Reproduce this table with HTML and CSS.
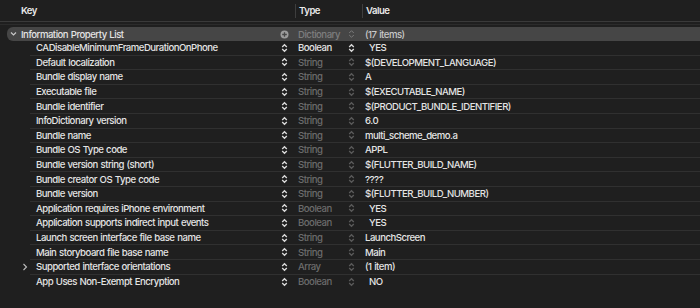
FILE: index.html
```html
<!DOCTYPE html>
<html lang="en">
<head>
    <meta charset="UTF-8">
    <title>Info.plist</title>
    <link rel="stylesheet" href="styles.css">
</head>
<body>
    <div class="header">
        <div class="h-key">Key</div>
        <div class="h-type">Type</div>
        <div class="h-value">Value</div>
    </div>
    <div class="rule"></div>

    <div class="root">
        <div class="key">
            <svg class="chev" width="7" height="6" viewBox="0 0 7 6"><path d="M1 1.5 L3.5 4 L6 1.5" fill="none" stroke="#c8c8c8" stroke-width="1.2"/></svg>
            Information Property List
        </div>
        <div class="btn">
            <svg width="9" height="9" viewBox="0 0 9 9"><circle cx="4.5" cy="4.5" r="4" fill="#9c9c9c"/><path d="M4.5 2.2 V6.8 M2.2 4.5 H6.8" stroke="#464646" stroke-width="1.3"/></svg>
        </div>
        <div class="type dim">Dictionary</div>
        <div class="btn">
            <svg width="7" height="10" viewBox="0 0 7 10"><path d="M1.2 4 L3.5 1.7 L5.8 4 M1.2 6 L3.5 8.3 L5.8 6" fill="none" stroke="#7a7a7a" stroke-width="1"/></svg>
        </div>
        <div class="value soft">(17 items)</div>
    </div>

    <div class="list" id="list"></div>

    <script>
        const items = [
            { key: "CADisableMinimumFrameDurationOnPhone", type: "Boolean", value: "YES", active: true },
            { key: "Default localization", type: "String", value: "$(DEVELOPMENT_LANGUAGE)" },
            { key: "Bundle display name", type: "String", value: "A" },
            { key: "Executable file", type: "String", value: "$(EXECUTABLE_NAME)" },
            { key: "Bundle identifier", type: "String", value: "$(PRODUCT_BUNDLE_IDENTIFIER)" },
            { key: "InfoDictionary version", type: "String", value: "6.0" },
            { key: "Bundle name", type: "String", value: "multi_scheme_demo.a" },
            { key: "Bundle OS Type code", type: "String", value: "APPL" },
            { key: "Bundle version string (short)", type: "String", value: "$(FLUTTER_BUILD_NAME)" },
            { key: "Bundle creator OS Type code", type: "String", value: "????" },
            { key: "Bundle version", type: "String", value: "$(FLUTTER_BUILD_NUMBER)" },
            { key: "Application requires iPhone environment", type: "Boolean", value: "YES" },
            { key: "Application supports indirect input events", type: "Boolean", value: "YES" },
            { key: "Launch screen interface file base name", type: "String", value: "LaunchScreen" },
            { key: "Main storyboard file base name", type: "String", value: "Main" },
            { key: "Supported interface orientations", type: "Array", value: "(1 item)", folded: true },
            { key: "App Uses Non-Exempt Encryption", type: "Boolean", value: "NO" }
        ];

        function stepper(color) {
            return `<svg width="7" height="10" viewBox="0 0 7 10"><path d="M1.2 4 L3.5 1.7 L5.8 4 M1.2 6 L3.5 8.3 L5.8 6" fill="none" stroke="${color}" stroke-width="1.3"/></svg>`;
        }

        const list = document.getElementById('list');
        items.forEach(item => {
            const row = document.createElement('div');
            row.className = 'row';
            const chev = item.folded
                ? '<svg class="fold" width="6" height="8" viewBox="0 0 6 8"><path d="M1.5 1 L4.5 4 L1.5 7" fill="none" stroke="#bdbdbd" stroke-width="1.1"/></svg>'
                : '';
            const isBool = item.type === 'Boolean';
            row.innerHTML = `
                <div class="key">${chev}${item.key}</div>
                <div class="btn">${stepper('#dcdcdc')}</div>
                <div class="type ${item.active ? '' : 'dim'}">${item.type}</div>
                <div class="btn">${stepper(item.active ? '#dcdcdc' : '#5a5a5a')}</div>
                <div class="value ${isBool ? 'bool' : ''}">${item.value}</div>
            `;
            list.appendChild(row);
        });
    </script>
</body>
</html>
```

FILE: styles.css
```css
body {
    margin: 0;
    background: #1f1f1f;
    color: #e4e4e4;
    font-family: Inter, "Liberation Sans", sans-serif;
    font-size: 9.6px;
    font-weight: 500;
    letter-spacing: -0.5px;
    word-spacing: 0.6px;
    overflow: hidden;
}

.header {
    display: grid;
    grid-template-columns: 295px 67px 1fr;
    height: 21px;
    align-items: center;
    border-bottom: 1px solid #3a3a3a;
    font-weight: 600;
    color: #e8e8e8;
}

.h-key {
    padding-left: 21px;
}

.h-type,
.h-value {
    border-left: 1px solid #3e3e3e;
    padding-left: 3px;
    line-height: 14px;
}

.rule {
    height: 2px;
    border-bottom: 1px solid #2b2b2b;
    margin-bottom: 2px;
}

.root,
.row {
    display: grid;
    grid-template-columns: 272px 11px 56px 11px 1fr;
    align-items: center;
}

.root {
    height: 14px;
    margin-left: 7px;
    background: #464646;
    border-radius: 6px 0 0 6px;
}

.root .key {
    padding-left: 3px;
    display: flex;
    align-items: center;
}

.chev {
    margin-right: 4px;
}

.row {
    height: 14.6px;
    box-sizing: border-box;
    margin-left: 30px;
    grid-template-columns: 249px 11px 56px 11px 1fr;
    border-bottom: 1px solid #303030;
}

.row:last-child {
    border-bottom: none;
}

.key,
.type,
.value {
    white-space: nowrap;
    overflow: hidden;
    line-height: 13px;
}

.row .key {
    padding-left: 6px;
    position: relative;
    overflow: visible;
}

.fold {
    position: absolute;
    left: -8px;
    top: 2.5px;
}

.btn {
    display: flex;
    justify-content: center;
    align-items: center;
}

.type {
    padding-left: 8px;
}

.value {
    padding-left: 8px;
}

.value.bool {
    padding-left: 12px;
}

.dim {
    color: #6c6c6c;
}

.root .dim {
    color: #7e7e7e;
}

.soft {
    color: #c9c9c9;
}
```
